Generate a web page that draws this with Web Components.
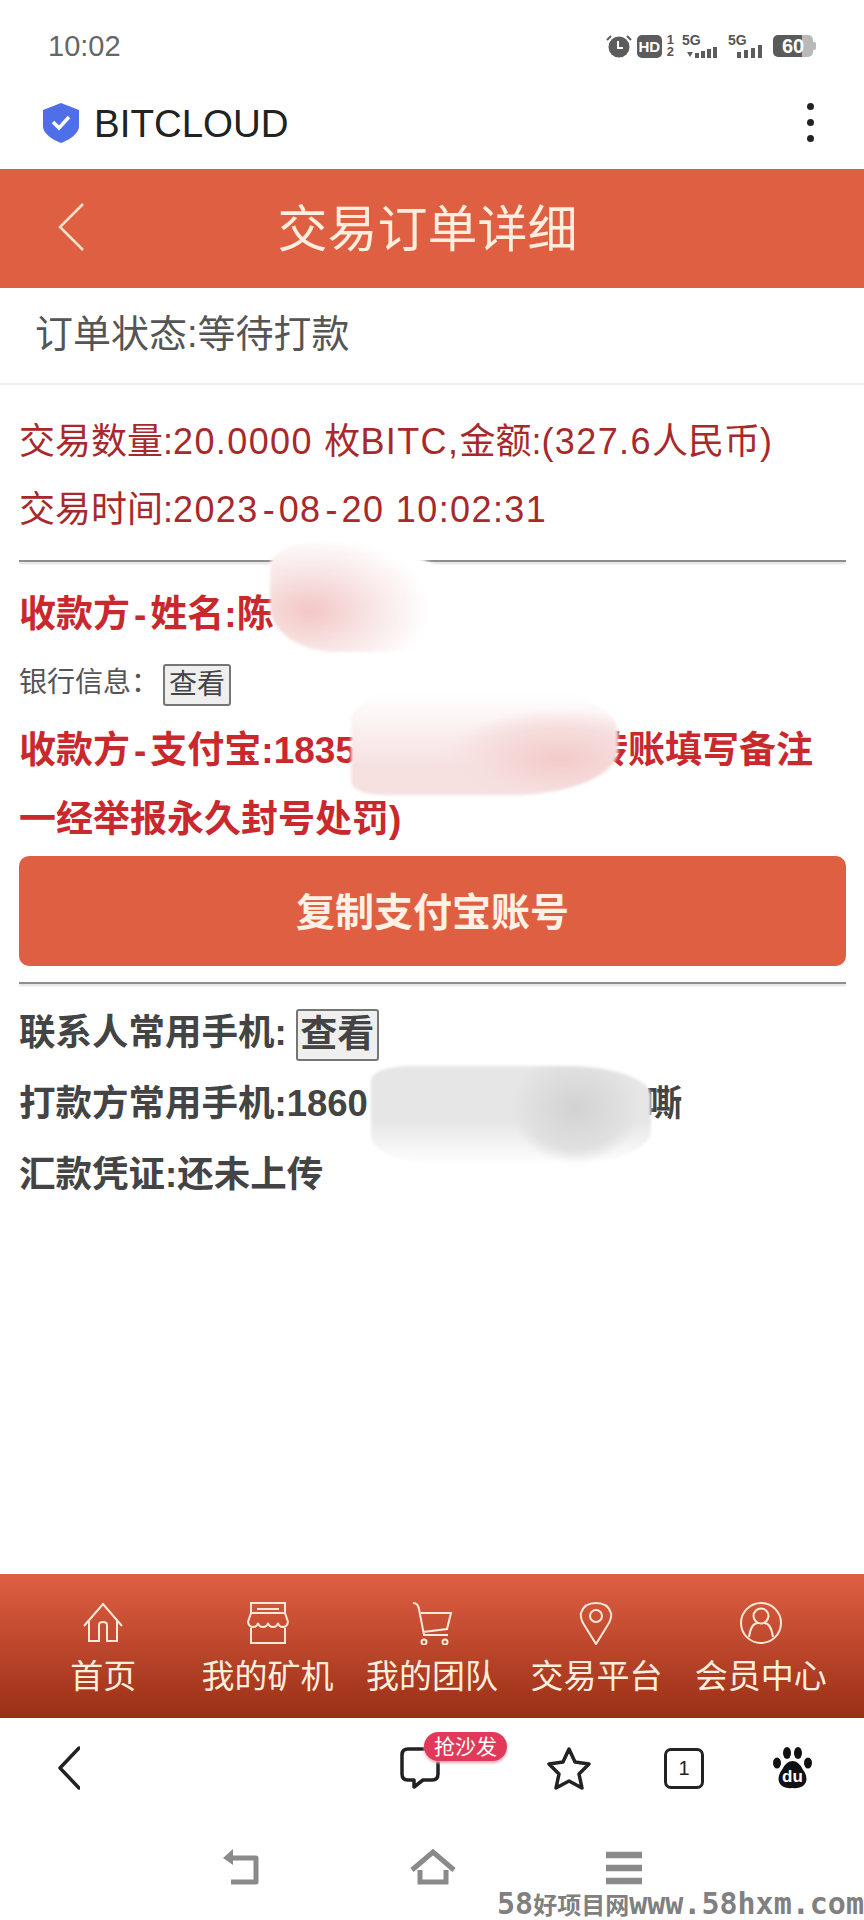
<!DOCTYPE html>
<html lang="zh">
<head>
<meta charset="utf-8">
<title>交易订单详细</title>
<style>
html, body { margin: 0; padding: 0; background: #fff; }
body { font-family: "Liberation Sans", "Noto Sans CJK SC", sans-serif; }
</style>
</head>
<body>
<app-page>
  <status-bar></status-bar>
  <app-bar></app-bar>
  <page-header>交易订单详细</page-header>
  <order-status>订单状态:等待打款</order-status>
  <order-detail>
    <detail-line kind="info">交易数量:<wide-text>20.0000 </wide-text>枚<wide-text>BITC,</wide-text>金额:<wide-text>(327.6</wide-text>人民币)</detail-line>
    <detail-line kind="info">交易时间:<wide-text>2023<wide-text dash>-</wide-text>08<wide-text dash>-</wide-text>20 10:02:31</wide-text></detail-line>
    <detail-rule></detail-rule>
    <detail-line kind="alert">收款方<wide-text dash>-</wide-text>姓名:陈</detail-line>
    <detail-line kind="small">银行信息：<view-button>查看</view-button></detail-line>
    <detail-line kind="alert">收款方<wide-text dash>-</wide-text>支付宝:1835<gap-space></gap-space>转账填写备注</detail-line>
    <detail-line kind="alert">一经举报永久封号处罚)</detail-line>
    <copy-button>复制支付宝账号</copy-button>
    <detail-rule tight></detail-rule>
    <detail-line kind="contact">联系人常用手机: <view-button big>查看</view-button></detail-line>
    <detail-line kind="contact">打款方常用手机:1860<gap-space wide></gap-space>嘶</detail-line>
    <detail-line kind="contact">汇款凭证:还未上传</detail-line>
    <smudge-mark kind="a"></smudge-mark>
    <smudge-mark kind="b"></smudge-mark>
    <smudge-mark kind="c"></smudge-mark>
  </order-detail>
  <tab-bar>
    <tab-item label="首页"><svg viewBox="0 0 44 44"><path d="M3 25 22 3l19 22M8 20v20h10V24q0-3 4-3t4 3v16h10V20"/></svg></tab-item>
    <tab-item label="我的矿机"><svg viewBox="0 0 44 44"><path d="M5 12V2h34v10M5 27v15h34V27M5 12h34l3 9q-1 5-5 5t-5-4q-1 4-5 4t-5-4q-1 4-5 4t-5-4q-1 4-5 4t-5-5zM11 8h22"/></svg></tab-item>
    <tab-item label="我的团队"><svg viewBox="0 0 44 44"><path d="M3 2q5 0 6 6l5 26h24M11 12h30l-4 16-24 3"/><circle cx="14" cy="41" r="2.5" class="fill"/><circle cx="35" cy="41" r="2.5" class="fill"/></svg></tab-item>
    <tab-item label="交易平台"><svg viewBox="0 0 44 44"><path d="M22 43 9 22q-3-6-2-10Q10 2 22 2t15 10q1 4-2 10z"/><circle cx="22" cy="15" r="6"/></svg></tab-item>
    <tab-item label="会员中心"><svg viewBox="0 0 44 44"><circle cx="22" cy="22" r="20"/><circle cx="22" cy="15" r="7.5"/><path d="M10 36q2-14 9-14M34 36q-2-14-9-14"/></svg></tab-item>
  </tab-bar>
  <browser-toolbar></browser-toolbar>
  <system-nav></system-nav>
</app-page>

<script>
class AppPage extends HTMLElement {
    constructor() {
        super();
        this.attachShadow({mode: "open"}).innerHTML = `
        <style>
        :host { display: flex; flex-direction: column; width: 864px; height: 1920px; overflow: hidden; background: #fff; }
        </style>
        <slot></slot>`;
    }
}
customElements.define("app-page", AppPage);

class StatusBar extends HTMLElement {
    constructor() {
        super();
        this.attachShadow({mode: "open"}).innerHTML = `
        <style>
        :host { display: flex; align-items: center; justify-content: space-between; box-sizing: border-box; height: 76px; padding: 16px 49px 0 48px; color: #666; }
        .time { font-size: 29px; line-height: 60px; }
        .icons { display: flex; align-items: center; gap: 5px; color: #555; }
        svg { display: block; }
        .hd { width: 25px; height: 23px; border-radius: 5px; background: #5c5c5c; color: #fff; font: bold 15px/23px "Liberation Sans", sans-serif; text-align: center; }
        .sim { display: flex; flex-direction: column; font: bold 13px/12px "Liberation Sans", sans-serif; margin-right: 3px; }
        .net { position: relative; width: 36px; height: 24px; font: bold 14px/12px "Liberation Sans", sans-serif; }
        .net.second { margin-left: 5px; }
        .net svg { position: absolute; right: 0; bottom: 0; }
        .battery { display: flex; position: relative; width: 40px; height: 22px; margin: 0 2px 0 4px; border-radius: 5px; background: linear-gradient(90deg, #5a5a5a 0 72%, #b9b9b9 72%); color: #fff; font: bold 20px/22px "Liberation Sans", sans-serif; justify-content: center; }
        .battery::after { content: ""; position: absolute; right: -3px; top: 7px; width: 3px; height: 8px; border-radius: 0 2px 2px 0; background: #b9b9b9; }
        </style>
        <div class="time">10:02</div>
        <div class="icons">
            <svg width="26" height="24" viewBox="0 0 26 24"><circle cx="13" cy="13" r="10.5" fill="#5c5c5c"/><path d="M12 7v7h5" fill="none" stroke="#fff" stroke-width="2"/><path d="M1 6l4-4M25 6l-4-4" stroke="#5c5c5c" stroke-width="2"/></svg>
            <div class="hd">HD</div>
            <div class="sim"><span>1</span><span>2</span></div>
            <div class="net">5G<svg width="32" height="11" viewBox="0 0 32 11" fill="#5c5c5c"><path d="M1 5h6L4 10z"/><rect x="9" y="6" width="4" height="5"/><rect x="15" y="4" width="4" height="7"/><rect x="21" y="2" width="4" height="9"/><rect x="27" y="0" width="4" height="11"/></svg></div>
            <div class="net second">5G<svg width="27" height="13" viewBox="0 0 27 13" fill="#5c5c5c"><rect x="0" y="7" width="4" height="6"/><rect x="7" y="5" width="4" height="8"/><rect x="14" y="3" width="4" height="10"/><rect x="21" y="0" width="4" height="13"/></svg></div>
            <div class="battery">60</div>
        </div>`;
    }
}
customElements.define("status-bar", StatusBar);

class AppBar extends HTMLElement {
    constructor() {
        super();
        this.attachShadow({mode: "open"}).innerHTML = `
        <style>
        :host { display: flex; align-items: center; box-sizing: border-box; height: 93px; padding: 0 50px 0 43px; color: #222; }
        .name { flex: 1; margin: 3px 0 0 15px; font-size: 38.5px; }
        .dots { display: flex; flex-direction: column; gap: 9px; }
        .dots i { display: block; width: 7px; height: 7px; border-radius: 50%; background: #222; }
        </style>
        <svg width="36" height="40" viewBox="0 0 36 40"><path d="M18 0 36 7v17q-1 9-18 16Q1 33 0 24V7z" fill="#4f6fe8"/><path d="M10 19l6 6 10-11" fill="none" stroke="#fff" stroke-width="3.5"/></svg>
        <div class="name">BITCLOUD</div>
        <div class="dots"><i></i><i></i><i></i></div>`;
    }
}
customElements.define("app-bar", AppBar);

class PageHeader extends HTMLElement {
    constructor() {
        super();
        this.attachShadow({mode: "open"}).innerHTML = `
        <style>
        :host { display: flex; align-items: center; justify-content: center; position: relative; box-sizing: border-box; height: 119px; padding: 0 9px 7px 0; background: #df5f43; color: #fdeedd; font-size: 50px; }
        svg { position: absolute; left: 58px; top: 34px; }
        </style>
        <svg width="27" height="48" viewBox="0 0 27 48"><path d="M25 1 2 24l23 23" fill="none" stroke="#fde3cc" stroke-width="2.5"/></svg>
        <slot></slot>`;
    }
}
customElements.define("page-header", PageHeader);

class OrderStatus extends HTMLElement {
    constructor() {
        super();
        this.attachShadow({mode: "open"}).innerHTML = `
        <style>
        :host { display: block; box-sizing: border-box; height: 97px; padding: 21px 0 0 35px; border-bottom: 2px solid #eee; color: #555; font-size: 38px; line-height: 50px; }
        </style>
        <slot></slot>`;
    }
}
customElements.define("order-status", OrderStatus);

class OrderDetail extends HTMLElement {
    constructor() {
        super();
        this.attachShadow({mode: "open"}).innerHTML = `
        <style>
        :host { display: block; flex: 1; position: relative; padding: 23px 18px 0 19px; overflow: hidden; }
        </style>
        <slot></slot>`;
    }
}
customElements.define("order-detail", OrderDetail);

class DetailLine extends HTMLElement {
    constructor() {
        super();
        this.attachShadow({mode: "open"}).innerHTML = `
        <style>
        :host { display: block; height: 71px; line-height: 71px; font-size: 36.5px; white-space: nowrap; }
        :host([kind="info"]) { color: #a8292b; font-size: 36px; height: 68px; line-height: 68px; }
        :host([kind="alert"]) { color: #c9282d; font-size: 37px; font-weight: bold; height: 69px; line-height: 69px; }
        :host([kind="small"]) { color: #555; font-size: 28px; height: 67px; line-height: 67px; }
        :host([kind="contact"]) { color: #444; font-weight: bold; }
        </style>
        <slot></slot>`;
    }
}
customElements.define("detail-line", DetailLine);

// latin runs are a bit wider in the reference than in Liberation.
// no whitespace in this template: the host is inline, a space would show up in the text
class WideText extends HTMLElement {
    constructor() {
        super();
        this.attachShadow({mode: "open"}).innerHTML = `<style>
        :host { display: inline; letter-spacing: 1.4px; }
        :host([dash]) { letter-spacing: 0; margin: 0 4px; }
        </style><slot></slot>`;
    }
}
customElements.define("wide-text", WideText);

class DetailRule extends HTMLElement {
    constructor() {
        super();
        this.attachShadow({mode: "open"}).innerHTML = `
        <style>
        :host { display: block; height: 2px; margin: 16px 0 18px; background: #8e8e8e; box-shadow: 0 2px 2px #ddd; }
        :host([tight]) { margin-bottom: 13px; }
        </style>`;
    }
}
customElements.define("detail-rule", DetailRule);

class ViewButton extends HTMLElement {
    constructor() {
        super();
        this.attachShadow({mode: "open"}).innerHTML = `
        <style>
        :host { display: inline-block; box-sizing: border-box; height: 42px; margin-left: 4px; padding: 0 4px; border: 2px solid #767676; border-radius: 3px; background: #efefef; color: #444; font-size: 28px; font-weight: normal; line-height: 38px; vertical-align: middle; }
        :host([big]) { height: 52px; margin-left: -1px; font-size: 37px; font-weight: bold; line-height: 48px; padding: 0 2.5px; }
        </style>
        <slot></slot>`;
    }
}
customElements.define("view-button", ViewButton);

class GapSpace extends HTMLElement {
    constructor() {
        super();
        this.attachShadow({mode: "open"}).innerHTML = `
        <style>
        :host { display: inline-block; width: 235px; }
        :host([wide]) { width: 278px; }
        </style>`;
    }
}
customElements.define("gap-space", GapSpace);

class CopyButton extends HTMLElement {
    constructor() {
        super();
        this.attachShadow({mode: "open"}).innerHTML = `
        <style>
        :host { display: flex; align-items: center; justify-content: center; box-sizing: border-box; height: 110px; margin-top: 2px; padding-bottom: 5px; border-radius: 10px; background: #df5f43; color: #fdf0e4; font-size: 39px; font-weight: bold; }
        </style>
        <slot></slot>`;
    }
}
customElements.define("copy-button", CopyButton);

// the hand drawn blur patches over the private data
class SmudgeMark extends HTMLElement {
    constructor() {
        super();
        this.attachShadow({mode: "open"}).innerHTML = `
        <style>
        :host { position: absolute; display: block; filter: blur(1.5px); }
        :host([kind="a"]) { left: 270px; top: 157px; width: 200px; height: 110px; border-radius: 30% 90% 50% 40% / 25% 70% 50% 50%; background: radial-gradient(ellipse 120px 75px at 20% 62%, #f3c6c6 0, #f8e4e4 50%, #fff 100%); }
        :host([kind="b"]) { left: 351px; top: 298px; width: 267px; height: 112px; border-radius: 35% 45% 40% 12%; background: radial-gradient(ellipse 115px 50px at 78% 68%, #f3caca 0, #f6dede 65%, transparent 100%), linear-gradient(#fff 8%, #f6e0e0 75%); }
        :host([kind="c"]) { left: 371px; top: 681px; width: 280px; height: 100px; border-radius: 14% 30% 35% 30%; background: radial-gradient(ellipse 65px 55px at 73% 42%, #d2d2d2 0, #e0e0e0 75%, transparent 100%), linear-gradient(#e6e6e6 55%, #fff 100%); }
        </style>`;
    }
}
customElements.define("smudge-mark", SmudgeMark);

class TabBar extends HTMLElement {
    constructor() {
        super();
        this.attachShadow({mode: "open"}).innerHTML = `
        <style>
        :host { display: grid; grid-template-columns: repeat(5, 1fr); box-sizing: border-box; height: 144px; padding: 27px 21px 0; background: linear-gradient(#df5f43, #9a2f15); }
        </style>
        <slot></slot>`;
    }
}
customElements.define("tab-bar", TabBar);

class TabItem extends HTMLElement {
    constructor() {
        super();
        this.attachShadow({mode: "open"}).innerHTML = `
        <style>
        :host { display: flex; flex-direction: column; align-items: center; color: #fdeedd; font-size: 33px; }
        ::slotted(svg) { display: block; width: 44px; height: 44px; fill: none; stroke: #fde9d8; stroke-width: 2; }
        .label { margin-top: 8px; line-height: 48px; white-space: nowrap; }
        </style>
        <slot></slot>
        <div class="label"></div>`;
        this.shadowRoot.querySelector(".label").textContent = this.getAttribute("label");
    }
}
customElements.define("tab-item", TabItem);

class BrowserToolbar extends HTMLElement {
    constructor() {
        super();
        this.attachShadow({mode: "open"}).innerHTML = `
        <style>
        :host { display: flex; align-items: center; box-sizing: border-box; height: 117px; padding: 0 52px 17px 58px; }
        svg { display: block; fill: none; stroke: #222; stroke-width: 3.5; stroke-linejoin: round; stroke-linecap: round; }
        .spacer { flex: 1; }
        .chat { position: relative; margin-right: 107px; }
        .badge { position: absolute; left: 24px; top: -15px; width: 83px; height: 29px; border-radius: 15px; background: #e0395a; box-shadow: 0 2px 3px #f0a5b5; color: #fff; font-size: 21px; line-height: 29px; text-align: center; }
        .star { margin-right: 73px; }
        .tab { display: flex; align-items: center; justify-content: center; box-sizing: border-box; width: 40px; height: 41px; margin-right: 69px; border: 3.5px solid #222; border-radius: 7px; color: #222; font-size: 20px; }
        </style>
        <svg width="22" height="44" viewBox="0 0 22 44"><path d="M21 2 2 22l19 20"/></svg>
        <div class="spacer"></div>
        <div class="chat">
            <svg width="40" height="42" viewBox="0 0 40 42"><path d="M8 2h24q6 0 6 6v19q0 6-6 6H23l-9 7v-7H8q-6 0-6-6V8q0-6 6-6z"/></svg>
            <div class="badge">抢沙发</div>
        </div>
        <svg class="star" width="44" height="44" viewBox="0 0 44 44"><path d="M22 3l6 13 14 2-10 10 3 14-13-7-13 7 3-14L2 18l14-2z"/></svg>
        <div class="tab">1</div>
        <svg width="39" height="42" viewBox="0 0 39 42" style="stroke:none;fill:#111">
            <ellipse cx="14" cy="6" rx="4" ry="6"/><ellipse cx="25" cy="6" rx="4" ry="6"/><ellipse cx="4" cy="16" rx="4" ry="5.5"/><ellipse cx="35" cy="16" rx="4" ry="5.5"/>
            <path d="M19.5 14q6 0 10 8 6 8 3 14-3 6-13 5-10 1-13-5-3-6 3-14 4-8 10-8z"/>
            <text x="19.5" y="35" font-size="17" font-weight="bold" text-anchor="middle" fill="#fff" font-family="Liberation Sans, sans-serif">du</text>
        </svg>`;
    }
}
customElements.define("browser-toolbar", BrowserToolbar);

class SystemNav extends HTMLElement {
    constructor() {
        super();
        this.attachShadow({mode: "open"}).innerHTML = `
        <style>
        :host { display: block; position: relative; height: 85px; }
        .keys { display: flex; justify-content: center; align-items: flex-start; gap: 150px; padding-top: 14px; }
        svg { display: block; fill: none; stroke: #8a8a8a; stroke-width: 5; }
        .mark { position: absolute; right: 0; bottom: 1px; color: #808080; font: bold 30px/26px "DejaVu Sans Mono", "Noto Sans CJK SC", monospace; white-space: nowrap; }
        .mark span { font-size: 24px; }
        </style>
        <div class="keys">
            <svg width="38" height="36" viewBox="0 0 38 36"><path d="M6 9h28v24H9" stroke-linejoin="round"/><path d="M11 0v16L1 9z" fill="#8a8a8a" stroke="none"/></svg>
            <svg width="46" height="36" viewBox="0 0 46 36"><path d="M2 21 23 3l21 18M10 21v12h26V21"/></svg>
            <svg width="36" height="36" viewBox="0 0 36 36" style="stroke-width:6.5"><path d="M0 6h36M0 19h36M0 32h36"/></svg>
        </div>
        <div class="mark">58<span>好项目网</span>www.58hxm.com</div>`;
    }
}
customElements.define("system-nav", SystemNav);
</script>
</body>
</html>
